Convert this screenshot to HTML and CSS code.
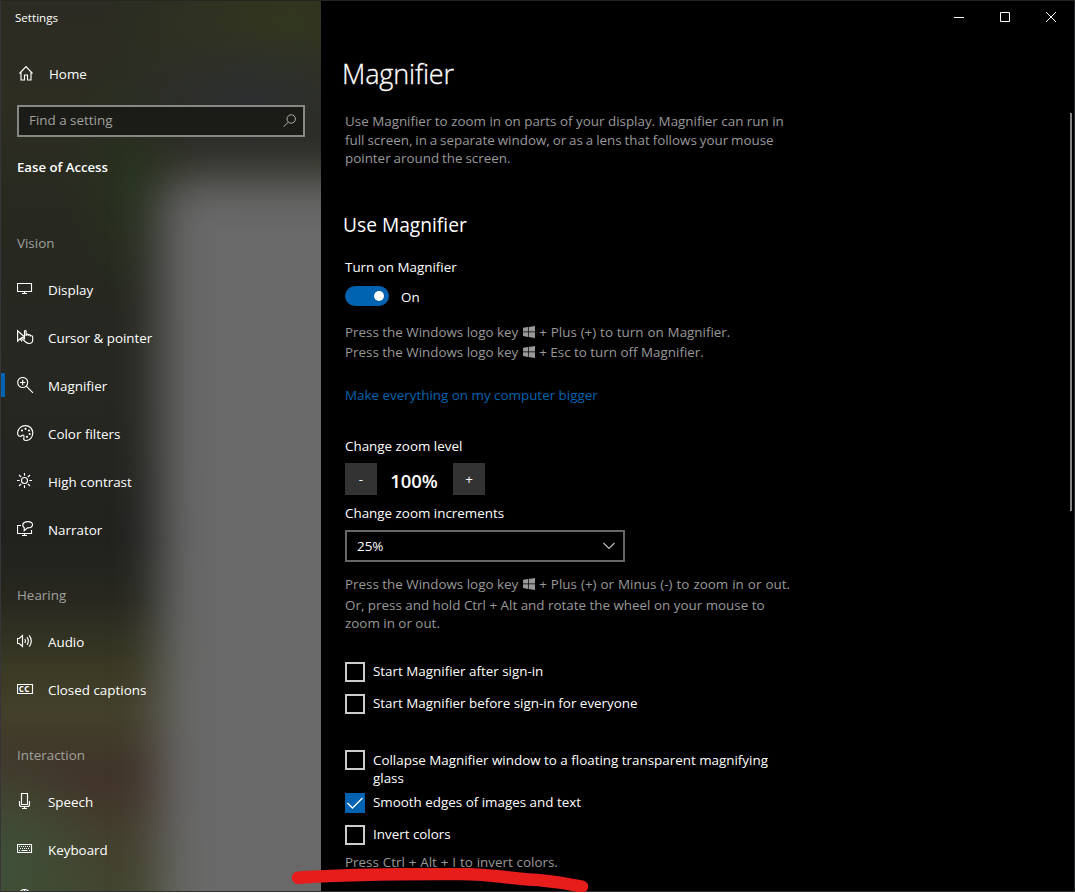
FILE: index.html
```html
<!DOCTYPE html>
<html lang="en">
<head>
<meta charset="utf-8">
<title>Settings</title>
<link rel="stylesheet" href="styles.css">
</head>
<body>
<svg class="defs" width="0" height="0"><symbol id="winlogo" viewBox="0 0 12 12"><path fill="currentColor" d="M0 1.8 5 1v4.6H0zM5.7.9 12 0v5.6H5.7zM0 6.3h5v4.6l-5-.8zM5.7 6.3H12V12l-6.3-1z"/></symbol></svg>
<div class="window">
  <aside class="sidebar">
    <div class="app-title">Settings</div>
    <a class="item home"><svg class="icon" viewBox="0 0 18 18"><path d="M2.500 8.500 9 1.700l6.500 6.800M4 7.500v7.500h3.500v-5h3v5H14V7.500"/></svg>Home</a>
    <div class="search"><span>Find a setting</span><svg class="search-icon" viewBox="0 0 14 14"><circle cx="8.200" cy="5" r="4.200"/><path d="M5.200 8.200.700 12.700"/></svg></div>
    <h2 class="area">Ease of Access</h2>
    <nav>
      <h3 class="group">Vision</h3>
      <a class="item"><svg class="icon" viewBox="0 0 18 18"><path d="M.5 2.500h14v8H.5zM7.500 10.500v2M5 12.500h5"/></svg>Display</a>
      <a class="item"><svg class="icon" viewBox="0 0 18 18"><path d="M7 7.500.600 1.700v10.400l2.700-2.600 1.500 3"/><path d="M7.500 10.500V2.300q0-.8.8-.8t.8.8V7M9.200 7V5.500q1-.8 2 0V7M11.200 7V5.800q1-.7 2 .2v1.500M13.200 7q2-.8 2.500.800v3.500q-.3 3.200-3.500 3.200-2 0-3.500-1.500L4.500 9.500q0-1.500 1.500-1l1.500 1.300"/></svg>Cursor &amp; pointer</a>
      <a class="item selected"><svg class="icon" viewBox="0 0 18 18"><circle cx="5.700" cy="5.500" r="5"/><path d="m9.300 9.200 6.700 6.600M3 5.500h5.400M5.700 2.800v5.400"/></svg>Magnifier</a>
      <a class="item"><svg class="icon" viewBox="0 0 18 18"><path d="M.6 7.800C1 3.500 4.200.600 8.300.600c4.500 0 7.500 3.200 7.500 7.400 0 4.400-3 7.500-6.800 7.500-2 0-2.500-.9-2.200-2.200.4-1.700.5-3-.6-3.300-.9-.2-1.200.8-2.200 1.200C1.800 11.700.400 10.500.600 7.800z"/><g class="dots"><circle cx="5" cy="5.500" r="1.100"/><circle cx="8.500" cy="3.800" r="1.100"/><circle cx="12" cy="5.500" r="1.100"/><circle cx="12.700" cy="9" r="1.100"/><circle cx="10" cy="11.800" r="1.100"/></g></svg>Color filters</a>
      <a class="item"><svg class="icon" viewBox="0 0 18 18"><circle cx="7.500" cy="7.500" r="3"/><path d="M7.500 0v2.700M7.500 12.300V15M0 7.500h2.700M12.300 7.500H15M2 2l2.200 2.200M10.800 10.800 13 13M2 13l2.200-2.200M10.800 4.200 13 2"/></svg>High contrast</a>
      <a class="item"><svg class="icon" viewBox="0 0 18 18"><path d="M4 4.500H.5v8h14V9M7.500 12.500v2M5 14.500h5"/><path d="M7.200 9.800v-3C4.500 4.500 5.700.600 10.700.600c6.500 0 6.500 6.200-.2 6.300z"/></svg>Narrator</a>
      <h3 class="group gap">Hearing</h3>
      <a class="item"><svg class="icon" viewBox="0 0 18 18"><path d="M.5 5.500h1.700l3.300-3v11l-3.300-3H.5zM7.800 6q1.300 2 0 4M10 4.200q2.700 3.800 0 7.600M12.200 2.400q4.200 5.600 0 11.200"/></svg>Audio</a>
      <a class="item"><svg class="icon" viewBox="0 0 18 18"><path d="M.5 3.500h15v9H.5z"/><text x="1.800" y="10.900">CC</text></svg>Closed captions</a>
      <h3 class="group gap">Interaction</h3>
      <a class="item"><svg class="icon" viewBox="0 0 18 18"><path d="M4.500.5h6v11h-6zM2.500 8v3.500q0 2 2 2h6q2 0 2-2V8M7.500 13.500v2M5 15.500h5"/></svg>Speech</a>
      <a class="item"><svg class="icon" viewBox="0 0 18 18"><path d="M.5 3.500h14v8H.5z"/><path stroke-dasharray="1 1" d="M2 5.500h11M3 7.500h10"/><path d="M2 9.500h1M4.500 9.500h6M12 9.500h1"/></svg>Keyboard</a>
      <a class="item"><svg class="icon" viewBox="0 0 18 18"><path d="M2.500 6.500q0-6 5-6t5 6v3q0 6-5 6t-5-6zM2.500 6.500h10M7.500.5v6"/></svg></a>
    </nav>
  </aside>
  <main class="content">
    <div class="caption-buttons">
      <svg viewBox="0 0 46 34"><path d="M18 17.500h10"/></svg><svg viewBox="0 0 46 34"><path d="M18.500 12.500h9v9h-9z"/></svg><svg viewBox="0 0 46 34"><path d="m18 12 10 10M28 12 18 22"/></svg>
    </div>
    <h1>Magnifier</h1>
    <p class="intro">Use Magnifier to zoom in on parts of your display. Magnifier can run in<br><span class="tight">full screen, in a separate window, or as a lens that follows your mouse</span><br><span class="tight">pointer around the screen.</span></p>
    <h2 class="section">Use Magnifier</h2>
    <div class="label">Turn on Magnifier</div>
    <div class="toggle-row"><span class="toggle"></span>On</div>
    <div class="hint keys">
      <div>Press the Windows logo key <svg class="win"><use href="#winlogo"/></svg> <span class="loose">+ Plus (+) to turn on Magnifier.</span></div>
      <div>Press the Windows logo key <svg class="win"><use href="#winlogo"/></svg> + Esc to turn off Magnifier.</div>
    </div>
    <a class="link">Make everything on my computer bigger</a>
    <div class="label level">Change zoom level</div>
    <div class="stepper"><button>-</button><strong>100%</strong><button>+</button></div>
    <div class="label increments">Change zoom increments</div>
    <div class="select"><span>25%</span><svg viewBox="0 0 12 8"><path d="m.5 1 5.500 5.500L11.500 1"/></svg></div>
    <div class="hint zoomkeys">Press the Windows logo key <svg class="win"><use href="#winlogo"/></svg> <span class="loose">+ Plus (+) or Minus (-) to zoom in or out.</span></div>
    <p class="hint wheel">Or, press and hold Ctrl + Alt and rotate the wheel on your mouse to<br>zoom in or out.</p>
    <div class="checks startup">
      <label class="check"><i class="box"></i><span>Start Magnifier after sign-in</span></label>
      <label class="check"><i class="box"></i><span>Start Magnifier before sign-in for everyone</span></label>
    </div>
    <div class="checks">
      <label class="check tall"><i class="box"></i><span>Collapse Magnifier window to a floating transparent magnifying<br>glass</span></label>
      <label class="check"><i class="box on"><svg viewBox="0 0 20 20"><path d="m2.500 10 5 5L17.500 5"/></svg></i><span>Smooth edges of images and text</span></label>
      <label class="check"><i class="box"></i><span>Invert colors</span></label>
    </div>
    <div class="hint invert loose">Press Ctrl + Alt + I to invert colors.</div>
    <div class="scrollbar"></div>
  </main>
</div>
<svg class="marker" viewBox="0 0 300 24"><path d="M8 9.700C70 5.500 120 6 170 6c30 0 55 5 78 6q22 2 44 6.500"/></svg>
</body>
</html>
```
FILE: styles.css
```css
* { box-sizing: border-box; }
body {
  margin: 0;
  height: 893px;
  overflow: hidden;
  background: #fff;
  color: #fff;
  font: 13.4px/20px "Open Sans", "Noto Sans", sans-serif;
}
h1, h2, h3, p { margin: 0; font-weight: 400; }
.defs { position: absolute; }
.window {
  display: grid;
  grid-template-columns: 321px 1fr;
  height: 892px;
  overflow: hidden;
  border-top: 1px solid #24261f;
  border-bottom: 1px solid #34332e;
}
svg { fill: none; stroke: #fff; flex: none; }
.win, symbol { stroke: none; }

/* Sidebar with the blurred backdrop */
.sidebar {
  position: relative;
  overflow: hidden;
  isolation: isolate;
  border-left: 1px solid #36363a;
  background:
    radial-gradient(ellipse 150px 75px at 250px 100px, #2c2e30 0%, #2c2e3000 100%),
    radial-gradient(ellipse 70px 130px at 130px 180px, #28321f 0%, #28321f00 100%),
    radial-gradient(ellipse 190px 110px at 290px 20px, #32371f 0%, #32371f00 100%),
    radial-gradient(ellipse 110px 130px at 0 865px, #3f5038 0%, #3f503800 100%),
    linear-gradient(#2b2b23 0, #2d2d22 100px, #272820 230px, #262721 400px, #21211e 540px, #282820 600px, #3a3924 665px, #42402b 710px, #403529 765px, #42352a 785px, #43402e 840px, #43452f 892px);
}
.sidebar::before {
  content: "";
  position: absolute;
  z-index: -1;
  left: 159px;
  top: 176px;
  width: 290px;
  height: 850px;
  border-radius: 24px 0 0 0;
  background: #696969;
  filter: blur(23px);
}
.app-title { height: 34px; padding-left: 14px; font-size: 11.6px; line-height: 34px; }
.item {
  display: flex;
  align-items: center;
  height: 48px;
  padding-left: 16px;
  gap: 13px;
}
.icon { width: 18px; height: 18px; stroke-width: 1.15; }
.icon text { fill: #fff; stroke: none; font: 700 8px "Open Sans", sans-serif; letter-spacing: .4px; }
.dots { fill: #fff; stroke: none; }
.home { height: 46px; margin-top: 16px; padding-left: 16px; gap: 14px; }
.search {
  display: flex;
  align-items: center;
  justify-content: space-between;
  width: 288px;
  height: 32px;
  margin: 8px 0 0 16px;
  padding: 0 6px 2px 10px;
  border: 2px solid #878784;
  background: #1b1b17;
  color: #a1a19f;
}
.search-icon { width: 14px; height: 14px; margin-top: 2px; stroke: #b0b0ae; }
.area { height: 20px; margin: 20px 0 0 16px; font-size: 13.2px; font-weight: 600; }
.group { height: 20px; margin: 56px 0 13px 16px; font-size: 13.4px; color: #a0a09d; }
.group.gap { margin: 31px 0 13px 16px; }
.selected { position: relative; }
.selected::before { content: ""; position: absolute; left: 0; top: 11px; width: 4px; height: 24px; background: #0063b1; }

/* Settings page */
.content {
  position: relative;
  padding-left: 24px;
  background: #000;
  border-right: 1px solid #24262a;
}
.caption-buttons { display: flex; justify-content: flex-end; height: 34px; margin-top: -1px; }
.caption-buttons svg { width: 46px; height: 34px; }
h1 { height: 40px; margin: 19px 0 0 -3px; font-size: 27px; font-weight: 300; letter-spacing: -.15px; line-height: 41px; -webkit-text-stroke: .3px #fff; }
.intro { height: 56px; margin-top: 19px; line-height: 18.6px; color: #999; }
.tight { word-spacing: -.58px; }
.loose { word-spacing: .42px; }
.section { height: 30px; margin: 42px 0 0 -2px; font-size: 19.2px; line-height: 30px; }
.label { height: 20px; }
.section + .label { margin-top: 17px; }
.toggle-row { display: flex; align-items: center; gap: 12px; height: 22px; margin-top: 9px; }
.toggle { width: 44px; height: 20px; margin-top: -2px; padding: 5px 5px 5px 29px; border-radius: 10px; background: #0063b1; }
.toggle::before { content: ""; display: block; width: 10px; height: 10px; border-radius: 50%; background: #fff; }
.hint { color: #999; white-space: nowrap; }
.keys { margin-top: 14px; }
.win { width: 12px; height: 12px; margin: 0 1px; vertical-align: -1px; }
.zoomkeys .loose { word-spacing: .55px; }
.link { display: block; margin-top: 23px; color: #0063b1; }
.level { margin-top: 31px; }
.stepper { display: flex; height: 32px; margin-top: 7px; }
.stepper button { width: 32px; height: 32px; padding: 0; border: 0; background: #333; color: #fff; font: inherit; }
.stepper strong { width: 76px; padding-right: 2px; font-size: 18.5px; font-weight: 600; line-height: 35px; text-align: center; }
.increments { margin-top: 8px; }
.select {
  display: flex;
  align-items: center;
  justify-content: space-between;
  width: 280px;
  height: 32px;
  margin-top: 7px;
  padding: 0 8px 0 10px;
  border: 2px solid #666;
}
.select svg { width: 12px; height: 8px; stroke: #bbb; stroke-width: 1.2; }
.zoomkeys { margin-top: 12px; }
.wheel { margin-top: 2px; height: 37px; line-height: 18px; }
.checks { display: flex; flex-direction: column; gap: 12px; }
.startup { margin: 29px 0 36px; }
.check { display: flex; gap: 8px; height: 20px; }
.check span { margin-top: -1px; white-space: nowrap; }
.check.tall { height: 31px; line-height: 18px; }
.check.tall span { margin-top: 1px; }
.box { flex: none; width: 20px; height: 20px; border: 2px solid #ccc; }
.box.on { border: 0; background: #0063b1; }
.box svg { display: block; width: 20px; height: 20px; stroke-width: 1.3; }
.invert { margin-top: 7px; }
.scrollbar { position: absolute; right: 2px; top: 112px; width: 2px; height: 398px; background: #858585; }

/* Freehand annotation over the page */
.marker { position: absolute; left: 290px; top: 868px; width: 300px; height: 24px; stroke: #e71d1b; stroke-width: 12.5; stroke-linecap: round; }
```
